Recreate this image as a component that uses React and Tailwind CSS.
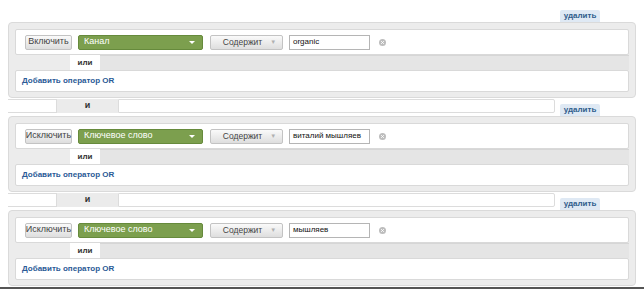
import React from 'react';

const blocks = [
    { mode: 'Включить', field: 'Канал', value: 'organic' },
    { mode: 'Исключить', field: 'Ключевое слово', value: 'виталий мышляев' },
    { mode: 'Исключить', field: 'Ключевое слово', value: 'мышляев' },
];

const GrayButton = ({ className = '', children }) => (
    <div className={`h-[15px] flex items-center justify-center whitespace-nowrap border border-[#c3c3c3] rounded-[2px] bg-gradient-to-b from-[#fafafa] to-[#dedede] text-[#444] ${className}`}>
        {children}
    </div>
);

// connector "и" between the condition panels
const AndConnector = ({ label = true }) => (
    <div className="flex-1 flex h-[14px] mt-[1px]">
        <div className="w-[49px] bg-white border border-[#dcdcdc] border-l-0"></div>
        <div className="w-[61px] flex items-center justify-center bg-[#ebebeb] text-[9px] font-bold text-[#333]">{label ? 'и' : ''}</div>
        <div className="flex-1 bg-white border border-[#dcdcdc] rounded-r-[2px]"></div>
    </div>
);

const Header = ({ first, last }) => (
    <div className={`flex pl-[8px] pr-[44px] ${first ? 'h-[22px]' : 'h-[18px]'}`}>
        {first ? <div className="flex-1"></div> : <AndConnector label={!last} />}
        <div className={`ml-[5px] self-end w-[40px] h-[12px] flex items-center justify-center rounded-t-[2px] text-[8px] font-bold text-[#2f5d8c] ${last ? '' : 'bg-[#dfe9f4]'}`}>
            {last ? '' : 'удалить'}
        </div>
    </div>
);

const ConditionPanel = ({ mode, field, value }) => (
    <div className="mx-[8px] bg-[#ececec] border border-[#dadada] rounded-[4px] px-[6px] pt-[6px] pb-[5px]">
        <div className="h-[26px] flex items-center pl-[9px] bg-white border border-[#d9d9d9] rounded-[2px]">
            <GrayButton className="w-[47px] text-[9px]">{mode}</GrayButton>
            <div className="ml-[6px] w-[125px] h-[15px] flex items-center justify-between pl-[5px] pr-[7px] bg-[#7c9f4e] border border-[#668a3c] rounded-[2px] text-[9px] text-white">
                <span>{field}</span>
                <svg width="6" height="3" viewBox="0 0 6 3"><path d="M0 0h6L3 3z" fill="#fff" /></svg>
            </div>
            <GrayButton className="ml-[7px] w-[73px] gap-[8px] pl-[6px] text-[8.5px]">
                <span>Содержит</span>
                <span className="text-[6px] text-[#b0b0b0]">▼</span>
            </GrayButton>
            <div className="ml-[6px] w-[81px] h-[15px] flex items-center px-[3px] whitespace-nowrap overflow-hidden bg-white border border-[#b5b5b5] text-[8px] text-[#111]">
                {value}
            </div>
            <svg className="ml-[9px]" width="7" height="7" viewBox="0 0 7 7">
                <circle cx="3.5" cy="3.5" r="3.5" fill="#bdbdbd" />
                <path d="M2.2 2.2l2.6 2.6M4.8 2.2l-2.6 2.6" stroke="#fff" strokeWidth="1" />
            </svg>
        </div>
        <div className="h-[15px] flex">
            <div className="w-[55px]"></div>
            <div className="w-[30px] flex items-center justify-center bg-white text-[8px] font-bold text-[#333]">или</div>
            <div className="flex-1 bg-[#e5e5e5] border-t border-[#d6d6d6]"></div>
        </div>
        <div className="h-[22px] flex items-center pl-[6px] bg-white border border-[#d9d9d9] rounded-[2px]">
            <span className="text-[8px] font-bold text-[#2a5a96]">Добавить оператор OR</span>
        </div>
    </div>
);

export default function App() {
    return (
        <div className="w-[644px] h-[289px] overflow-hidden bg-white border-b-2 border-[#555] font-['Liberation_Sans',Arial,sans-serif]">
            {blocks.map((b, i) => (
                <div key={i}>
                    <Header first={i === 0} />
                    <ConditionPanel {...b} />
                </div>
            ))}
            <Header last />
        </div>
    );
}
